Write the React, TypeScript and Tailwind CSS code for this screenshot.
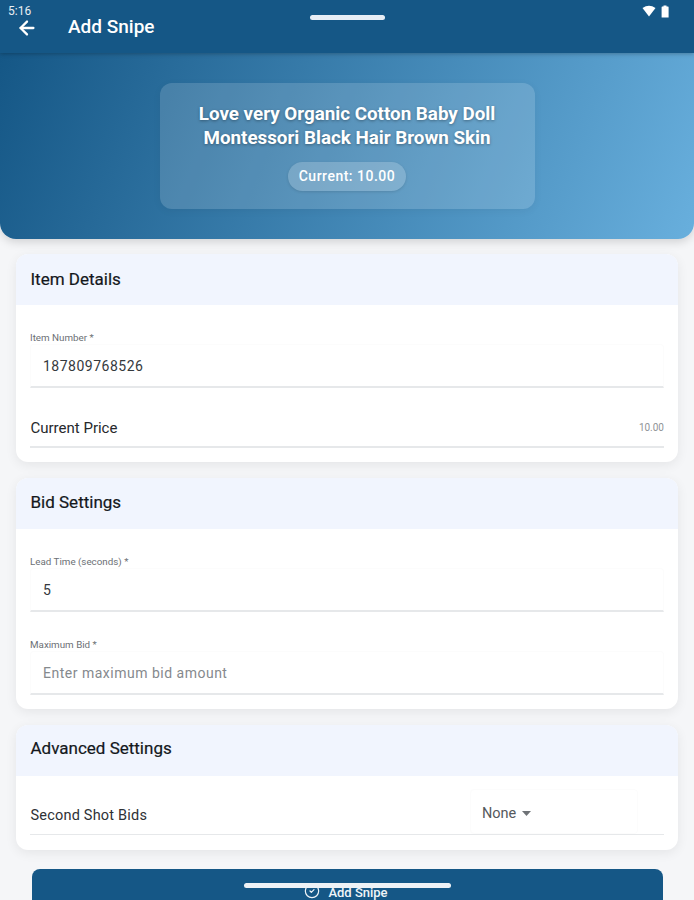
import type { ReactNode } from "react"
import { ArrowLeft, CircleCheck } from "lucide-react"

function Section({ title, titleClass = "", children }: { title: string; titleClass?: string; children: ReactNode }) {
  return (
    <div className="mx-4 overflow-hidden rounded-xl bg-white shadow-[0_3px_12px_rgba(0,0,0,0.07)]">
      <div className={`flex h-[51px] items-center bg-[#f1f5fe] px-[14.5px] text-[17px] font-normal text-[#14181c] [-webkit-text-stroke:0.2px_#14181c] ${titleClass}`}>{title}</div>
      <div className="px-[14px]">{children}</div>
    </div>
  )
}

function Field({ label, value, placeholder, className = "" }: { label: string; value?: string; placeholder?: string; className?: string }) {
  return (
    <div className={className}>
      <div className="h-3 text-[9.8px] leading-3 text-[#6c7075]">{label}</div>
      <div className="flex h-[44px] items-center rounded-t border border-b-2 border-[#fcfcfc] border-b-[#e6e8ea] pl-[12px] pt-[1px] text-[14px] tracking-[0.5px]">
        {value ? <span className="text-[#35393d]">{value}</span> : <span className="text-[#85898d]">{placeholder}</span>}
      </div>
    </div>
  )
}

function StatusBar() {
  return (
    <div className="absolute inset-x-0 top-0 z-20">
      <div className="absolute left-[8px] top-[4px] text-[12px] leading-[15px] text-[#e8eef3]">5:16</div>
      <div className="absolute right-[25px] top-[5px] flex items-start gap-[5px]">
        <svg width="14" height="12" viewBox="0 0 14 12">
          <path d="M0.5 3 Q7 -1.5 13.5 3 L7 11.5 Z" fill="#fff" />
        </svg>
        <svg width="8" height="13" viewBox="0 0 8 13">
          <path d="M2.5 0.5 H5.5 V1.5 H7 Q7.6 1.5 7.6 2.2 V12.5 H0.6 V2.2 Q0.6 1.5 1.2 1.5 H2.5 Z" fill="#fff" />
        </svg>
      </div>
      <div className="absolute left-[310px] top-[15px] h-[5px] w-[75px] rounded-full bg-[#e6edf5]" />
    </div>
  )
}

export default function App() {
  return (
    <div className="relative h-[900px] w-[694px] overflow-hidden bg-[#f5f6f8] font-['Roboto',sans-serif]">
      <header className="relative z-10 flex h-[53px] items-center bg-[#155786] pl-[16px] pt-[2px] text-white shadow-[0_1px_4px_rgba(0,0,0,0.25)]">
        <ArrowLeft size={22} strokeWidth={2.5} />
        <h1 className="ml-[30px] text-[19px] font-medium">Add Snipe</h1>
      </header>
      <StatusBar />

      <section className="flex h-[186px] items-start justify-center rounded-b-2xl bg-[linear-gradient(112deg,#155786,#68afdd)] pt-[30px] shadow-[0_3px_10px_rgba(0,0,0,0.15)]">
        <div className="flex h-[126px] w-[375px] flex-col items-center rounded-xl bg-white/15 pt-[19px] shadow-[0_2px_8px_rgba(0,0,0,0.05)]">
          <p className="text-center text-[18.8px] font-bold leading-[24px] text-white [text-shadow:0_1px_3px_rgba(0,0,0,0.35)]">
            Love very Organic Cotton Baby Doll
            <br />
            Montessori Black Hair Brown Skin
          </p>
          <div className="mt-[12px] flex h-[29px] w-[118px] items-center justify-center rounded-full bg-white/20 text-[14px] font-medium tracking-[0.5px] text-white shadow-[0_1px_3px_rgba(0,0,0,0.12)]">
            Current: 10.00
          </div>
        </div>
      </section>

      <div className="mt-[15px] flex flex-col gap-4">
        <Section title="Item Details">
          <Field label="Item Number *" value="187809768526" className="pt-[27px]" />
          <div className="flex h-[60px] items-end justify-between border-b-2 border-[#e6e8ea] pb-[7px] pl-[0.5px] text-[15px] text-[#26292c]">
            <span>Current Price</span>
            <span className="pb-[4px] text-[10px] text-[#8f9397]">10.00</span>
          </div>
          <div className="h-[14px]" />
        </Section>

        <Section title="Bid Settings" titleClass="pb-[1px]">
          <Field label="Lead Time (seconds) *" value="5" className="pt-[27px]" />
          <Field label="Maximum Bid *" placeholder="Enter maximum bid amount" className="pt-[27px]" />
          <div className="h-[14px]" />
        </Section>

        <Section title="Advanced Settings" titleClass="pb-[4px]">
          <div className="flex h-[59px] items-end border-b border-[#e6e8ea]">
            <span className="pb-[7px] pl-[0.5px] text-[14.5px] tracking-[0.2px] text-[#2e3135]">Second Shot Bids</span>
            <div className="ml-auto mr-[26px] flex h-[45px] w-[168px] items-center rounded border border-[#fcfcfc] pl-[11px] pt-[4px] text-[14.5px] text-[#55595d]">
              None
              <svg width="9" height="5" viewBox="0 0 9 5" className="ml-[6px]">
                <path d="M0 0 H9 L4.5 5 Z" fill="#6f7377" />
              </svg>
            </div>
          </div>
          <div className="h-[15px]" />
        </Section>
      </div>

      <button type="button" className="mx-auto mt-[19px] flex h-[60px] w-[631px] items-start justify-center gap-[8px] rounded-lg bg-[#155786] pr-[2px] pt-[14px] text-[13px] font-medium text-[#f0f4f8]">
        <CircleCheck size={16} strokeWidth={1.8} />
        Add Snipe
      </button>
      <div className="absolute left-[244px] top-[883px] h-[5px] w-[207px] rounded-full bg-[#eef2f6]" />
    </div>
  )
}
